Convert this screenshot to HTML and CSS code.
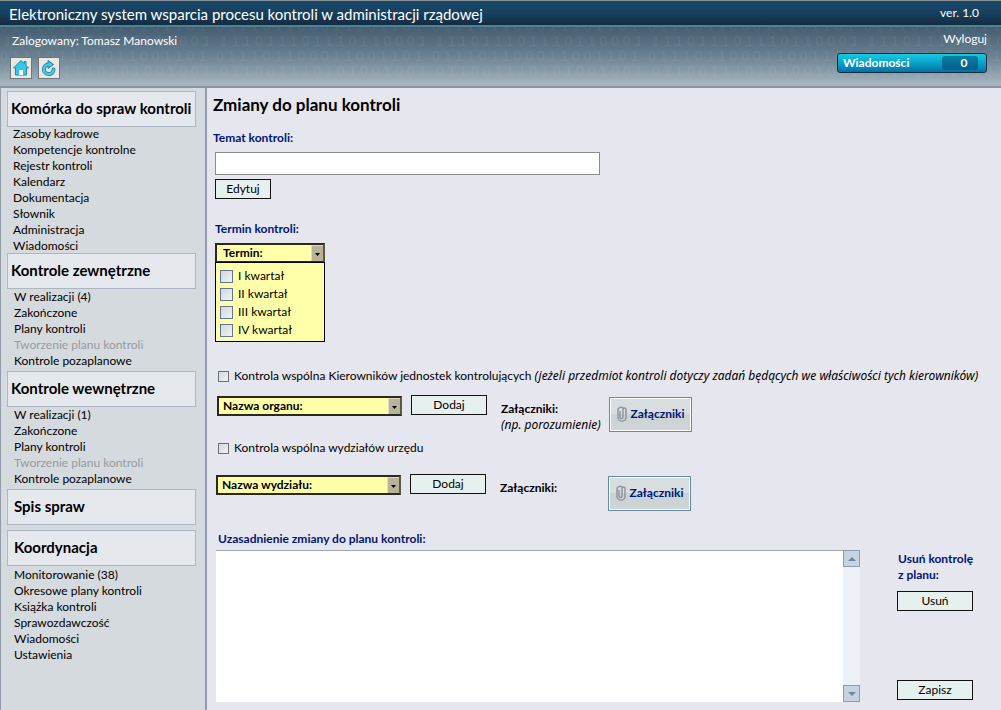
FILE: index.html
```html
<!DOCTYPE html>
<html lang="pl">
<head>
<meta charset="utf-8">
<title>Zmiany do planu kontroli</title>
<link rel="stylesheet" href="styles.css">
</head>
<body>
<header class="top">
  <div class="titlebar">
    <span class="app-name">Elektroniczny system wsparcia procesu kontroli w administracji rządowej</span>
    <span class="version">ver. 1.0</span>
  </div>
  <div class="banner">
    <svg class="digits" aria-hidden="true">
      <defs>
        <pattern id="bits" width="216" height="60" patternUnits="userSpaceOnUse">
          <text x="0" y="4">0 1 1 1 0 1 1 0 0 0 1 1 1 0 1 1 0 1</text>
          <text x="4" y="19">1 1 1 0 1 1 1 0 1 1 1 0 1 1 0 0 0 1</text>
          <text x="0" y="34">0 1 1 1 0 1 1 0 0 0 1 1 0 0 1 1 0 1</text>
          <text x="4" y="49">0 1 1 0 0 1 1 1 0 1 0 1 0 0 1 0 0 1</text>
        </pattern>
      </defs>
      <rect width="100%" height="100%" fill="url(#bits)"/>
    </svg>
    <div class="user">
      <span class="login">Zalogowany: Tomasz Manowski</span>
      <div class="tools">
        <button class="tool" type="button" aria-label="Strona główna">
          <svg width="18" height="18" viewBox="0 0 18 18"><path d="M9 1.500 L1.500 9 H3.500 V16 H14.500 V9 H16.500 L14 6.500 V2.500 H12 V4.500 Z" fill="#36c6ea" stroke="#2387a8" stroke-width="1" stroke-linejoin="round"/><rect x="7" y="11" width="4" height="5" fill="#fff"/></svg>
        </button>
        <button class="tool" type="button" aria-label="Odśwież">
          <svg width="18" height="18" viewBox="0 0 18 18"><g stroke="#2a87a5" stroke-linejoin="round"><path d="M13.500 10.500 A4.800 4.800 0 1 1 8.500 5.500" fill="none" stroke-width="4" stroke-linecap="round"/><path d="M8 1.500 L13.500 5.500 L8 9.500 Z" fill="#2a87a5" stroke-width="1"/></g><path d="M13.500 10.500 A4.800 4.800 0 1 1 8.500 5.500" fill="none" stroke="#45cdee" stroke-width="2.200" stroke-linecap="round"/><path d="M8.500 2.700 L12.500 5.500 L8.500 8.300 Z" fill="#45cdee"/></svg>
        </button>
      </div>
    </div>
    <div class="session">
      <a class="logout" href="#">Wyloguj</a>
      <a class="messages" href="#"><span>Wiadomości</span><span class="count">0</span></a>
    </div>
  </div>
</header>
<div class="body">
  <nav class="side">
    <h2 class="box">Komórka do spraw kontroli</h2>
    <ul class="menu tight">
      <li><a href="#">Zasoby kadrowe</a></li>
      <li><a href="#">Kompetencje kontrolne</a></li>
      <li><a href="#">Rejestr kontroli</a></li>
      <li><a href="#">Kalendarz</a></li>
      <li><a href="#">Dokumentacja</a></li>
      <li><a href="#">Słownik</a></li>
      <li><a href="#">Administracja</a></li>
      <li><a href="#">Wiadomości</a></li>
    </ul>
    <h2 class="box">Kontrole zewnętrzne</h2>
    <ul class="menu">
      <li><a href="#">W realizacji (4)</a></li>
      <li><a href="#">Zakończone</a></li>
      <li><a href="#">Plany kontroli</a></li>
      <li class="off">Tworzenie planu kontroli</li>
      <li><a href="#">Kontrole pozaplanowe</a></li>
    </ul>
    <h2 class="box">Kontrole wewnętrzne</h2>
    <ul class="menu">
      <li><a href="#">W realizacji (1)</a></li>
      <li><a href="#">Zakończone</a></li>
      <li><a href="#">Plany kontroli</a></li>
      <li class="off">Tworzenie planu kontroli</li>
      <li><a href="#">Kontrole pozaplanowe</a></li>
    </ul>
    <h2 class="box inset spaced">Spis spraw</h2>
    <h2 class="box inset">Koordynacja</h2>
    <ul class="menu loose">
      <li><a href="#">Monitorowanie (38)</a></li>
      <li><a href="#">Okresowe plany kontroli</a></li>
      <li><a href="#">Książka kontroli</a></li>
      <li><a href="#">Sprawozdawczość</a></li>
      <li><a href="#">Wiadomości</a></li>
      <li><a href="#">Ustawienia</a></li>
    </ul>
  </nav>
  <main class="main">
    <h1 class="heading">Zmiany do planu kontroli</h1>
    <section class="topic">
      <label class="label" for="topic">Temat kontroli:</label>
      <input class="text" id="topic" type="text">
      <button class="btn small" type="button">Edytuj</button>
    </section>
    <section class="term">
      <label class="label" for="term">Termin kontroli:</label>
      <div class="combo">
        <select class="select" id="term"><option>Termin:</option></select>
        <div class="options">
          <label class="option"><input class="tick large" type="checkbox">I kwartał</label>
          <label class="option"><input class="tick large" type="checkbox">II kwartał</label>
          <label class="option"><input class="tick large" type="checkbox">III kwartał</label>
          <label class="option"><input class="tick large" type="checkbox">IV kwartał</label>
        </div>
      </div>
    </section>
    <section class="joint">
      <label class="check"><input class="tick" type="checkbox"><span>Kontrola wspólna Kierowników jednostek kontrolujących <i>(jeżeli przedmiot kontroli dotyczy zadań będących we właściwości tych kierowników)</i></span></label>
      <div class="row">
        <select class="select" aria-label="Nazwa organu"><option>Nazwa organu:</option></select>
        <button class="btn" type="button">Dodaj</button>
        <p class="note"><b>Załączniki:</b><br><i>(np. porozumienie)</i></p>
        <button class="attach" type="button"><svg width="10" height="16" viewBox="0 0 10 16"><path d="M3 5 V11 A1.500 1.500 0 0 0 6 11 V3.500 A1.500 1.500 0 0 1 9 3.500 V11.500 A4 3.600 0 0 1 1 11.500 V4.500 A3 3 0 0 1 6 2" fill="none" stroke="#8a949d" stroke-width="1.400"/></svg>Załączniki</button>
      </div>
    </section>
    <section class="joint second">
      <label class="check"><input class="tick" type="checkbox"><span>Kontrola wspólna wydziałów urzędu</span></label>
      <div class="row">
        <select class="select" aria-label="Nazwa wydziału"><option>Nazwa wydziału:</option></select>
        <button class="btn" type="button">Dodaj</button>
        <p class="note"><b>Załączniki:</b></p>
        <button class="attach" type="button"><svg width="10" height="16" viewBox="0 0 10 16"><path d="M3 5 V11 A1.500 1.500 0 0 0 6 11 V3.500 A1.500 1.500 0 0 1 9 3.500 V11.500 A4 3.600 0 0 1 1 11.500 V4.500 A3 3 0 0 1 6 2" fill="none" stroke="#8a949d" stroke-width="1.400"/></svg>Załączniki</button>
      </div>
    </section>
    <section class="bottom">
      <div class="reason">
        <label class="label" for="reason">Uzasadnienie zmiany do planu kontroli:</label>
        <div class="area">
          <textarea class="textarea" id="reason"></textarea>
          <div class="scroll">
            <button class="arrow" type="button" aria-label="W górę"><svg width="8" height="4" viewBox="0 0 8 4"><path d="M0 4 L4 0 L8 4 Z" fill="#6f8499"/></svg></button>
            <button class="arrow" type="button" aria-label="W dół"><svg width="8" height="4" viewBox="0 0 8 4"><path d="M0 0 L4 4 L8 0 Z" fill="#6f8499"/></svg></button>
          </div>
        </div>
      </div>
      <div class="actions">
        <div class="remove">
          <p class="label">Usuń kontrolę<br>z planu:</p>
          <button class="btn" type="button">Usuń</button>
        </div>
        <button class="btn" type="button">Zapisz</button>
      </div>
    </section>
  </main>
</div>
</body>
</html>
```
FILE: styles.css
```css
* { box-sizing: border-box; }
body {
  margin: 0;
  min-height: 100vh;
  display: flex;
  flex-direction: column;
  background: #e6e6ef;
  color: #000;
  font: 12px/16px Lato, "Noto Sans", sans-serif;
}
h1, h2, p, ul { margin: 0; padding: 0; }
ul { list-style: none; }
a { color: inherit; text-decoration: none; }
i { font-family: "Noto Sans", sans-serif; line-height: 15px; }
button, input, select, textarea { margin: 0; font: inherit; color: inherit; border-radius: 0; }

.top { color: #fff; border-bottom: 2px solid #8b939d; }
.titlebar {
  display: flex;
  justify-content: space-between;
  height: 27px;
  padding: 0 22px 0 9px;
  border-top: 1px solid #8a9299;
  border-bottom: 2px solid #50828e;
  background: linear-gradient(#1a486a, #17405f 50%, #142c42);
}
.app-name { font-size: 15px; line-height: 26px; }
.version { line-height: 23px; }
.banner {
  position: relative;
  display: flex;
  justify-content: space-between;
  height: 59px;
  padding: 4px 14px 0 10px;
  background: linear-gradient(#435c71, #6c8293 50%, #a9b7c2);
}
.digits {
  position: absolute;
  inset: 0;
  width: 100%;
  height: 100%;
  font: 14px "Liberation Sans", sans-serif;
  fill: #fff;
  opacity: 0.06;
}
.user, .session { position: relative; }
.login { display: block; padding-left: 2px; line-height: 20px; }
.tools { display: flex; gap: 6px; margin-top: 6px; }
.tool {
  display: grid;
  place-items: center;
  width: 22px;
  height: 22px;
  padding: 0;
  border: 1px solid #70777b;
  background: #e8e9e2;
}
.session { display: flex; flex-direction: column; align-items: flex-end; }
.logout { line-height: 16px; }
.messages {
  display: flex;
  justify-content: space-between;
  align-items: center;
  width: 150px;
  height: 20px;
  margin-top: 6px;
  padding: 0 8px 0 5px;
  border: 1px solid #142f3d;
  border-radius: 3px;
  background: linear-gradient(#18cbe4, #0aa0c8 50%, #0570a8);
  font-weight: bold;
}
.count {
  width: 36px;
  padding-left: 8px;
  border-radius: 3px;
  background: linear-gradient(#08809f, #055f8c);
  line-height: 14px;
  text-align: center;
}

.body { display: flex; flex: 1; }
.side {
  flex: 0 0 207px;
  padding: 3px 9px 0 6px;
  border: solid #939ca6;
  border-width: 0 2px 0 1px;
  background: #d5dade;
}
.box {
  padding: 8px 3px 10px;
  border: 1px solid #aeb7c1;
  background: #e5e9ee;
  font-size: 15px;
  line-height: 16px;
  white-space: nowrap;
}
.inset { padding-left: 6px; }
.spaced { margin-bottom: 5px; }
.menu { padding: 0 0 2px 7px; }
.tight { margin: -1px 0; padding: 0 0 0 6px; }
.loose { padding-top: 1px; }
.off { color: #959a9e; }

.main { flex: 1; min-width: 0; padding: 7px 0 8px 6px; }
.heading { font-size: 17px; line-height: 20px; }
.label { display: block; font-weight: bold; color: #001577; }
.topic { display: flex; flex-direction: column; align-items: flex-start; margin-top: 15px; }
.text { width: 385px; height: 23px; margin: 6px 0 4px 2px; border: 1px solid #8b8b8f; background: #fff; }
.btn {
  width: 76px;
  height: 20px;
  padding: 0;
  border: 1px solid #111;
  background: #e6f0ee;
  line-height: 16px;
}
.small { width: 56px; margin-left: 2px; }
.term { margin: 22px 0 0 2px; }
.combo { display: flex; flex-direction: column; width: 110px; margin-top: 6px; }
.select {
  appearance: none;
  width: 185px;
  height: 20px;
  padding: 0 4px;
  border: 2px solid #2b2a18;
  border-right-color: #5c5940;
  background: #ffffaa url("data:image/svg+xml,%3Csvg xmlns='http://www.w3.org/2000/svg' width='12' height='16'%3E%3Cpath fill='%23b7b298' d='M0 0h12v16H0z'/%3E%3Cpath fill='%23e0dcc4' d='M0 0h12v1H1v15H0z'/%3E%3Cpath d='M4 8h5L6.500 11z'/%3E%3C/svg%3E") right center no-repeat;
  font-weight: bold;
  line-height: 16px;
}
.options { margin-top: -1px; padding: 4px 4px 2px; border: 1px solid #000; background: #ffffaa; }
.combo .select { width: 110px; padding: 0 6px; }
.option { display: flex; align-items: center; gap: 5px; height: 18px; }
.tick {
  appearance: none;
  width: 11px;
  height: 11px;
  flex: none;
  border: 1px solid #66717a;
  background: linear-gradient(135deg, #d4d6dc, #f2f2f5);
}
.large { width: 13px; height: 13px; border-color: #5f7891; }
.joint { margin: 26px 0 0 5px; }
.check { display: flex; align-items: center; gap: 5px; height: 16px; white-space: nowrap; }
.row { display: flex; align-items: flex-start; margin: 11px 0 0 -1px; }
.row .select { margin-top: 1px; }
.row .btn { margin: 0 14px 0 9px; }
.note { width: 108px; padding-top: 6px; }
.attach {
  display: flex;
  align-items: center;
  justify-content: center;
  gap: 4px;
  width: 83px;
  height: 35px;
  margin-top: 2px;
  padding: 0 0 2px;
  border: 1px solid #6288b8;
  box-shadow: inset 0 0 0 1px #fff;
  background: linear-gradient(#d8dde0 0 50%, #cbd2d4 50%, #d0d6d8);
  color: #001577;
  font-weight: bold;
}
.second { margin: 7px 0 0 5px; }
.second .row { margin: 18px 0 0 -2px; }
.bottom { display: flex; gap: 37px; margin: 20px 0 0 3px; }
.reason { flex: 1; }
.reason .label { padding-left: 2px; }
.area { display: flex; height: 152px; margin-top: 3px; }
.textarea { flex: 1; border: 0; border-top: 1px solid #a3a7b5; background: #fff; resize: none; }
.scroll { display: flex; flex-direction: column; justify-content: space-between; background: #edf0f5; }
.arrow {
  display: grid;
  place-items: center;
  width: 17px;
  height: 17px;
  padding: 0;
  border: 1px solid #8b9db2;
  background: #c6d4e2;
}
.actions { display: flex; flex-direction: column; justify-content: space-between; width: 104px; padding: 20px 0 2px; }
.remove .label { margin-left: 1px; padding-bottom: 8px; }
```
